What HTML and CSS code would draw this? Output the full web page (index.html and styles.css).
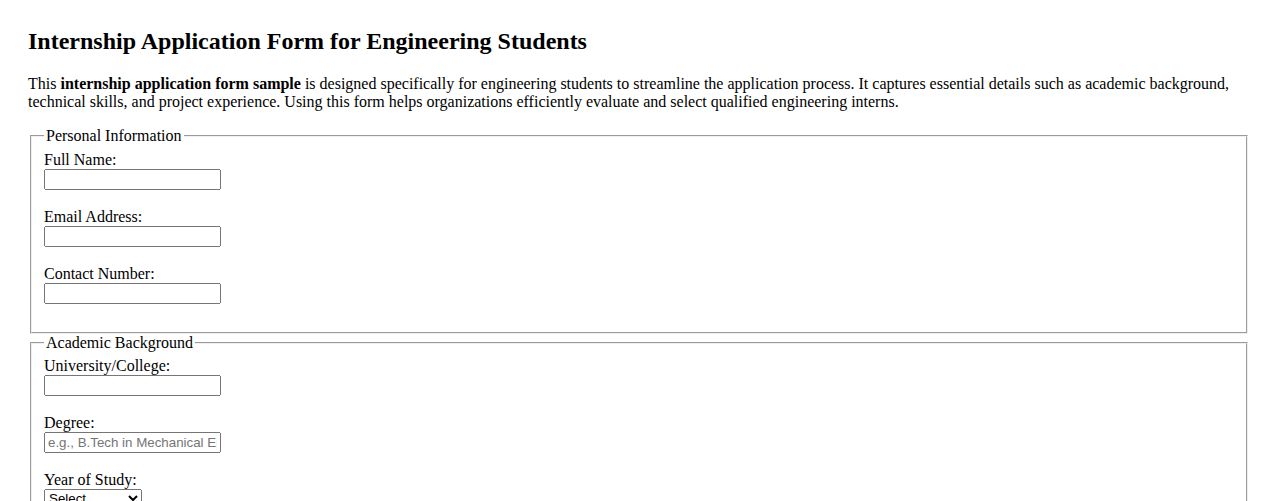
FILE: index.html
```html
<!DOCTYPE html>
<html lang="en">
<head>
<meta charset="utf-8">
<title>Internship Application Form for Engineering Students</title>
<link rel="stylesheet" href="styles.css">
</head>
<body>
<div class="page">
<h2 class="title">Internship Application Form for Engineering Students</h2>
<p class="intro">This <strong>internship application form sample</strong> is designed specifically for engineering students to streamline the application process. It captures essential details such as academic background, technical skills, and project experience. Using this form helps organizations efficiently evaluate and select qualified engineering interns.</p>
<form class="form">
<fieldset class="group">
<legend>Personal Information</legend>
<label for="fullname">Full Name:</label><br>
<input class="field" type="text" id="fullname" name="fullname"><br><br>
<label for="email">Email Address:</label><br>
<input class="field" type="email" id="email" name="email"><br><br>
<label for="phone">Contact Number:</label><br>
<input class="field" type="tel" id="phone" name="phone"><br><br>
</fieldset>
<fieldset class="group">
<legend>Academic Background</legend>
<label for="university">University/College:</label><br>
<input class="field" type="text" id="university" name="university"><br><br>
<label for="degree">Degree:</label><br>
<input class="field" type="text" id="degree" name="degree" placeholder="e.g., B.Tech in Mechanical Engineering"><br><br>
<label for="year">Year of Study:</label><br>
<select class="choice" id="year" name="year">
<option value="">Select</option>
<option>1st Year</option>
<option>2nd Year</option>
<option>3rd Year</option>
<option>Final Year</option>
</select><br><br>
<label for="gpa">CGPA/Percentage:</label><br>
<input class="field" type="text" id="gpa" name="gpa"><br><br>
</fieldset>
</form>
</div>
</body>
</html>
```
FILE: styles.css
```css
html, body {
  margin: 0;
  padding: 0;
  background: #ffffff;
}
body {
  font-family: "Liberation Serif", "Times New Roman", serif;
  font-size: 16px;
  color: #000000;
}
.page {
  padding: 8px 28px 20px 28px;
}
.title {
  font-size: 24px;
  font-weight: bold;
  margin: 20px 0 20px 0;
}
.intro {
  margin: 16px 0;
}
.form {
  margin: 0;
}
.group {
  margin: 0 2px;
}
.field, .choice {
  font-family: Arial, "Liberation Sans", sans-serif;
  font-size: 13.333px;
}
.field {
  box-sizing: border-box;
  width: 177px;
}
.field::placeholder {
  color: #757575;
}
.choice {
  box-sizing: border-box;
  width: 98px;
}
```
